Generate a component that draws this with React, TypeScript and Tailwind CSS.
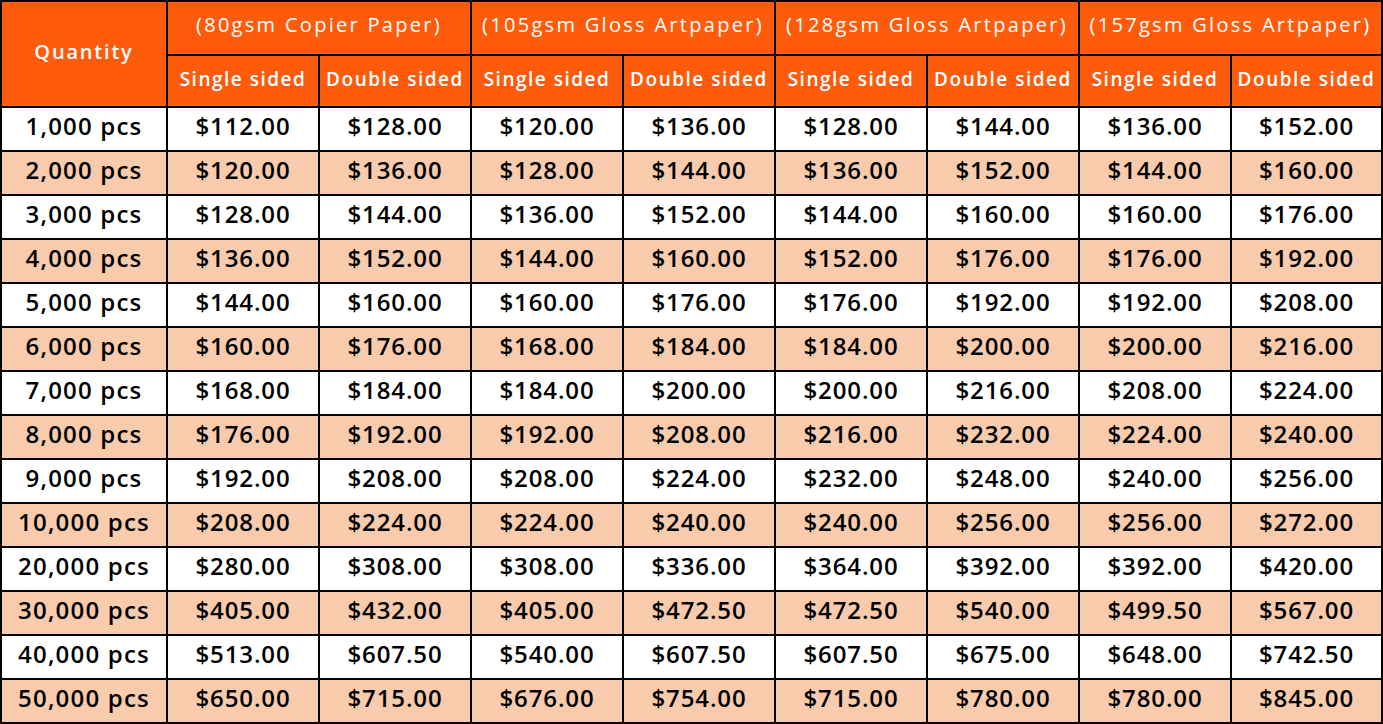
import React from "react";

const papers = [
  "(80gsm Copier Paper)",
  "(105gsm Gloss Artpaper)",
  "(128gsm Gloss Artpaper)",
  "(157gsm Gloss Artpaper)",
];

const rows: [string, string[]][] = [
  ["1,000 pcs", ["112.00", "128.00", "120.00", "136.00", "128.00", "144.00", "136.00", "152.00"]],
  ["2,000 pcs", ["120.00", "136.00", "128.00", "144.00", "136.00", "152.00", "144.00", "160.00"]],
  ["3,000 pcs", ["128.00", "144.00", "136.00", "152.00", "144.00", "160.00", "160.00", "176.00"]],
  ["4,000 pcs", ["136.00", "152.00", "144.00", "160.00", "152.00", "176.00", "176.00", "192.00"]],
  ["5,000 pcs", ["144.00", "160.00", "160.00", "176.00", "176.00", "192.00", "192.00", "208.00"]],
  ["6,000 pcs", ["160.00", "176.00", "168.00", "184.00", "184.00", "200.00", "200.00", "216.00"]],
  ["7,000 pcs", ["168.00", "184.00", "184.00", "200.00", "200.00", "216.00", "208.00", "224.00"]],
  ["8,000 pcs", ["176.00", "192.00", "192.00", "208.00", "216.00", "232.00", "224.00", "240.00"]],
  ["9,000 pcs", ["192.00", "208.00", "208.00", "224.00", "232.00", "248.00", "240.00", "256.00"]],
  ["10,000 pcs", ["208.00", "224.00", "224.00", "240.00", "240.00", "256.00", "256.00", "272.00"]],
  ["20,000 pcs", ["280.00", "308.00", "308.00", "336.00", "364.00", "392.00", "392.00", "420.00"]],
  ["30,000 pcs", ["405.00", "432.00", "405.00", "472.50", "472.50", "540.00", "499.50", "567.00"]],
  ["40,000 pcs", ["513.00", "607.50", "540.00", "607.50", "607.50", "675.00", "648.00", "742.50"]],
  ["50,000 pcs", ["650.00", "715.00", "676.00", "754.00", "715.00", "780.00", "780.00", "845.00"]],
];

export default function App() {
  return (
    <div className="w-[1383px] h-[724px] bg-white">
      <div className="grid w-[1383px] gap-[2px] bg-black p-[2px] grid-cols-[164px_150px_150px_150px_150px_150px_150px_150px_1fr] grid-rows-[52px_50px_repeat(14,42px)] font-['Open_Sans',sans-serif]">
        <div className="row-span-2 flex items-center justify-center pb-[5px] bg-[#fe5b0c] text-white text-[20px] font-semibold tracking-[1.8px]">
          Quantity
        </div>
        {papers.map((p) => (
          <div
            key={p}
            className="col-span-2 flex items-center justify-center pb-[6px] bg-[#fe5b0c] text-white text-[20px] font-medium tracking-[2.3px]"
          >
            {p}
          </div>
        ))}
        {papers.flatMap((p) => [
          <div key={p + "s"} className="flex items-center justify-center pb-[4px] bg-[#fe5b0c] text-white text-[19px] font-semibold tracking-[1.5px]">
            Single sided
          </div>,
          <div key={p + "d"} className="flex items-center justify-center pb-[4px] bg-[#fe5b0c] text-white text-[19px] font-semibold tracking-[1.5px]">
            Double sided
          </div>,
        ])}
        {rows.map(([q, prices], i) => {
          const bg = i % 2 === 0 ? "bg-white" : "bg-[#f8cbad]";
          return (
            <React.Fragment key={q}>
              <div className={`${bg} flex items-center justify-center pb-[6px] text-black text-[24px] font-semibold tracking-[1.2px]`}>
                {q}
              </div>
              {prices.map((v, j) => (
                <div key={j} className={`${bg} flex items-center justify-center pb-[6px] text-black text-[24px] font-semibold tracking-[0.9px]`}>
                  ${v}
                </div>
              ))}
            </React.Fragment>
          );
        })}
      </div>
    </div>
  );
}
